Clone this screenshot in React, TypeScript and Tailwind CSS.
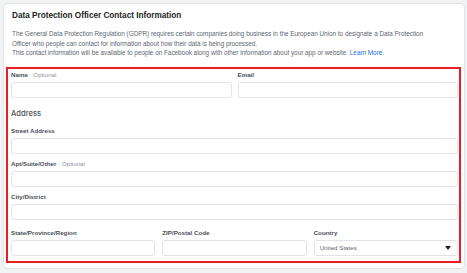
const font = { fontFamily: '"Liberation Sans", Arial, sans-serif' };

function Label({ text, optional }: { text: string; optional?: boolean }) {
  return (
    <div className="h-[8px] text-[6.2px] leading-[8px] font-bold text-[#4b4f56] mb-[3px] whitespace-nowrap">
      {text}
      {optional && <span className="font-normal text-[#90949c]"> · Optional</span>}
    </div>
  );
}

function Input({ children }: { children?: React.ReactNode }) {
  return (
    <div className="h-[16px] border border-[#e2e4e8] rounded-[3px] bg-white flex items-center px-[5px]">
      {children}
    </div>
  );
}

export default function App() {
  return (
    <div className="w-[467px] h-[273px] bg-[#f2f3f5] p-[3px]" style={font}>
      <div className="h-[266px] w-[462px] bg-white border border-[#e1e3e6] rounded-[4px] pt-[7px] px-[7px] pb-[5px] flex flex-col">
        <h1 className="text-[8.2px] leading-[10px] font-bold text-[#1c1e21] ml-[1px]">
          Data Protection Officer Contact Information
        </h1>
        <p className="mt-[8px] text-[6.35px] leading-[9.5px] text-[#606770] ml-[1px] whitespace-nowrap">
          The General Data Protection Regulation (GDPR) requires certain companies doing business in the European Union to designate a Data Protection
          <br />
          Officer who people can contact for information about how their data is being processed.
          <br />
          This contact information will be available to people on Facebook along with other information about your app or website.{" "}
          <span className="text-[#216fdb]">Learn More.</span>
        </p>

        <div className="mt-[9px] -ml-[5px] w-[455px] flex-1 border-2 border-[#ec1c24] pl-[3px] pr-[1px] pt-[2px]">
          <div className="grid grid-cols-2 gap-x-[6px]">
            <div>
              <Label text="Name" optional />
              <Input />
            </div>
            <div>
              <Label text="Email" />
              <Input />
            </div>
          </div>

          <div
            className="mt-[11px] h-[10px] text-[7.6px] leading-[10px] font-medium text-[#4b4f56]"
            style={{ fontFamily: 'Inter, "Liberation Sans", sans-serif' }}
          >
            Address
          </div>

          <div className="mt-[8px]">
            <Label text="Street Address" />
            <Input />
          </div>
          <div className="mt-[6px]">
            <Label text="Apt/Suite/Other" optional />
            <Input />
          </div>
          <div className="mt-[6px]">
            <Label text="City/District" />
            <Input />
          </div>

          <div className="mt-[9px] grid grid-cols-3 gap-x-[7px]">
            <div>
              <Label text="State/Province/Region" />
              <Input />
            </div>
            <div>
              <Label text="ZIP/Postal Code" />
              <Input />
            </div>
            <div>
              <Label text="Country" />
              <Input>
                <span className="text-[6.2px] text-[#606770] flex-1">United States</span>
                <svg width="6" height="4" viewBox="0 0 6 4" className="mr-[1px]">
                  <path d="M0 0 L6 0 L3 4 Z" fill="#1c1e21" />
                </svg>
              </Input>
            </div>
          </div>
        </div>
      </div>
    </div>
  );
}
